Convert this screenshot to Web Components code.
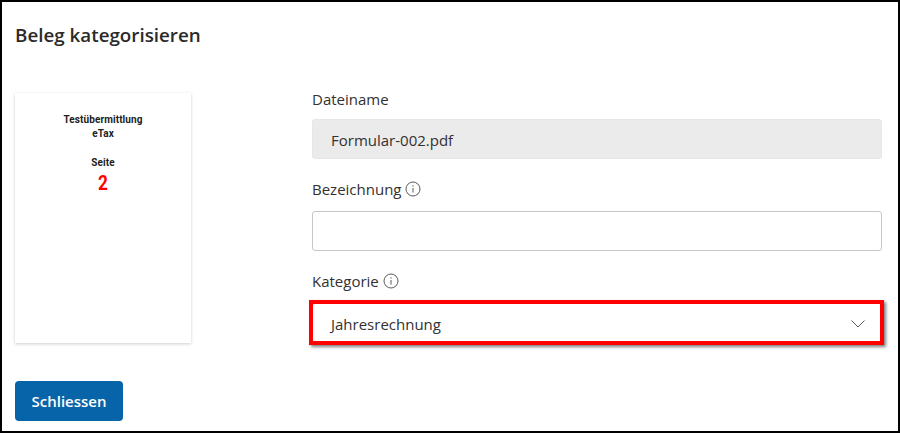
<!DOCTYPE html>
<html lang="de">
<head>
<meta charset="utf-8">
<title>Beleg kategorisieren</title>
<style>
  html, body { margin: 0; padding: 0; background: #fff; }
  body { font-family: "Open Sans", "Noto Sans", "Liberation Sans", sans-serif; color: #323130; }
</style>
</head>
<body>
<beleg-dialog>
  <span slot="title">Beleg kategorisieren</span>
  <beleg-preview slot="preview" heading="Testübermittlung" sub="eTax" label="Seite" page="2"></beleg-preview>
  <beleg-field slot="fields" label="Dateiname" value="Formular-002.pdf" kind="readonly"></beleg-field>
  <beleg-field slot="fields" label="Bezeichnung" info kind="text"></beleg-field>
  <beleg-field slot="fields" label="Kategorie" info value="Jahresrechnung" kind="select" marked></beleg-field>
  <beleg-button slot="actions">Schliessen</beleg-button>
</beleg-dialog>

<script>
// ── Dialog frame ─────────────────────────────────────────────────────────
class BelegDialog extends HTMLElement {
  constructor() {
    super();
    this.attachShadow({ mode: 'open' });
    this.shadowRoot.innerHTML = `
      <style>
        :host {
          display: block;
          box-sizing: border-box;
          width: 900px;
          height: 433px;
          border: 2px solid #000;
          padding: 0 16px 0 13px;
          overflow: hidden;
        }
        h1 {
          margin: 0;
          padding-top: 20px;
          height: 72px;
          box-sizing: border-box;
          font-size: 18.8px;
          line-height: 27px;
          font-weight: 600;
          color: #2b2a29;
        }
        .body {
          display: grid;
          grid-template-columns: 176px 570px;
          column-gap: 121px;
          height: 307px;
          padding-top: 19px;
          box-sizing: border-box;
        }
        .fields { display: flex; flex-direction: column; gap: 18px; margin-top: -6px; }
      </style>
      <h1><slot name="title"></slot></h1>
      <div class="body">
        <slot name="preview"></slot>
        <div class="fields"><slot name="fields"></slot></div>
      </div>
      <slot name="actions"></slot>
    `;
  }
}

// ── Document thumbnail ───────────────────────────────────────────────────
class BelegPreview extends HTMLElement {
  connectedCallback() {
    this.attachShadow({ mode: 'open' });
    this.shadowRoot.innerHTML = `
      <style>
        :host {
          display: flex;
          flex-direction: column;
          align-items: center;
          box-sizing: border-box;
          width: 176px;
          height: 250px;
          padding-top: 20px;
          background: #fff;
          box-shadow: 0 1px 3px rgba(0,0,0,0.2);
          font-family: "Roboto", "Liberation Sans", sans-serif;
          font-weight: 700;
          font-size: 10px;
          line-height: 14px;
          letter-spacing: 0.1px;
          color: #222;
          text-align: center;
        }
        .label { margin-top: 15px; }
        .page {
          display: inline-block;
          color: #f00;
          font-size: 21px;
          line-height: 22px;
          margin-top: 2px;
          transform: scaleX(0.82);
        }
      </style>
      <div>${this.getAttribute('heading')}</div>
      <div>${this.getAttribute('sub')}</div>
      <div class="label">${this.getAttribute('label')}</div>
      <div class="page">${this.getAttribute('page')}</div>
    `;
  }
}

// ── Form field: label + box ──────────────────────────────────────────────
class BelegField extends HTMLElement {
  connectedCallback() {
    const kind   = this.getAttribute('kind') || 'text';
    const value  = this.getAttribute('value') || '';
    const hasInfo = this.hasAttribute('info');
    const info   = hasInfo ? `
      <svg class="info" width="16" height="16" viewBox="0 0 16 16" fill="none" stroke="#5a5a5a">
        <circle cx="8" cy="8" r="7" stroke-width="1"/>
        <path d="M8 7v4.6" stroke-width="1"/>
        <circle cx="8" cy="4.9" r="0.7" fill="#5a5a5a" stroke="none"/>
      </svg>` : '';
    const chevron = kind === 'select' ? `
      <svg class="chev" width="14" height="8" viewBox="0 0 14 8" fill="none" stroke="#605e5c" stroke-width="1">
        <path d="M0.5 0.5l6.5 6.5 6.5-6.5"/>
      </svg>` : '';
    this.attachShadow({ mode: 'open' });
    this.shadowRoot.innerHTML = `
      <style>
        :host { display: block; }
        label {
          display: flex;
          align-items: center;
          gap: 4px;
          height: 24px;
          margin-bottom: ${hasInfo ? 10 : 8}px;
          font-size: 15px;
          line-height: 24px;
          color: #323130;
        }
        .box {
          position: relative;
          display: flex;
          align-items: center;
          justify-content: space-between;
          box-sizing: border-box;
          height: 40px;
          padding: 0 16px 0 18px;
          border: 1px solid #c8c6c4;
          border-radius: 3px;
          font-size: 15px;
          color: #323130;
        }
        .box span { padding-top: 2px; }
        .readonly { background: #ebebeb; border-color: #e6e6e6; }
        .chev { margin-top: 2px; }
        .mark {
          position: absolute;
          inset: -4px -3px -3px -4px;
          border: 4px solid #f00;
          box-shadow: 2px 2px 3px rgba(0,0,0,0.5);
          pointer-events: none;
        }
      </style>
      <label>${this.getAttribute('label')}${info}</label>
      <div class="box ${kind}">
        <span>${value}</span>${chevron}
        ${this.hasAttribute('marked') ? '<div class="mark"></div>' : ''}
      </div>
    `;
  }
}

// ── Primary button ───────────────────────────────────────────────────────
class BelegButton extends HTMLElement {
  constructor() {
    super();
    this.attachShadow({ mode: 'open' });
    this.shadowRoot.innerHTML = `
      <style>
        :host {
          display: inline-flex;
          align-items: center;
          justify-content: center;
          box-sizing: border-box;
          width: 108px;
          height: 40px;
          background: #0864a8;
          border-radius: 4px;
          color: #fff;
          font-size: 15px;
          font-weight: 600;
        }
      </style>
      <slot></slot>
    `;
  }
}

customElements.define('beleg-dialog', BelegDialog);
customElements.define('beleg-preview', BelegPreview);
customElements.define('beleg-field', BelegField);
customElements.define('beleg-button', BelegButton);
</script>
</body>
</html>
